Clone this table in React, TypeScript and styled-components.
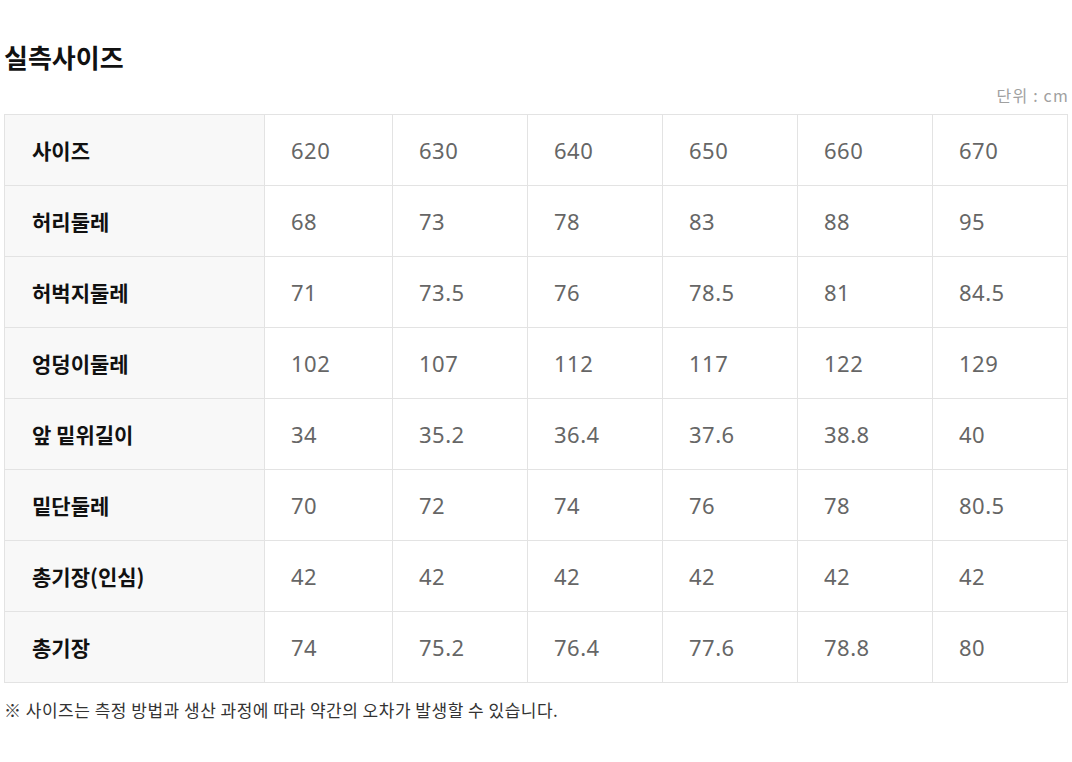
import React from "react";
import styled, { createGlobalStyle } from "styled-components";

const sizes = ["620", "630", "640", "650", "660", "670"];

const rows: { label: string; values: string[] }[] = [
  { label: "허리둘레", values: ["68", "73", "78", "83", "88", "95"] },
  { label: "허벅지둘레", values: ["71", "73.5", "76", "78.5", "81", "84.5"] },
  { label: "엉덩이둘레", values: ["102", "107", "112", "117", "122", "129"] },
  { label: "앞 밑위길이", values: ["34", "35.2", "36.4", "37.6", "38.8", "40"] },
  { label: "밑단둘레", values: ["70", "72", "74", "76", "78", "80.5"] },
  { label: "총기장(인심)", values: ["42", "42", "42", "42", "42", "42"] },
  { label: "총기장", values: ["74", "75.2", "76.4", "77.6", "78.8", "80"] },
];

// widths of the value columns; the last one takes what is left
const colWidths = [128, 135, 135, 135, 135];

const App: React.FC = () => {
  return (
    <>
      <GlobalStyle />
      <Wrapper>
        <Title>실측사이즈</Title>
        <Unit>단위 : cm</Unit>
        <SizeTable>
          <colgroup>
            <Col $width={260} />
            {colWidths.map((w, i) => (
              <Col key={i} $width={w} />
            ))}
            <Col />
          </colgroup>
          <tbody>
            <tr>
              <HeadCell>사이즈</HeadCell>
              {sizes.map((s) => (
                <ValueCell key={s}>{s}</ValueCell>
              ))}
            </tr>
            {rows.map((row) => (
              <tr key={row.label}>
                <HeadCell>{row.label}</HeadCell>
                {row.values.map((v, i) => (
                  <ValueCell key={i}>{v}</ValueCell>
                ))}
              </tr>
            ))}
          </tbody>
        </SizeTable>
        <Note>※ 사이즈는 측정 방법과 생산 과정에 따라 약간의 오차가 발생할 수 있습니다.</Note>
      </Wrapper>
    </>
  );
};

const GlobalStyle = createGlobalStyle`
  body {
    margin: 0;
    background: #fff;
    font-family: "Noto Sans CJK KR", "Noto Sans", sans-serif;
  }
`;

const Wrapper = styled.div`
  padding: 40px 4px 0 4px;
  width: 1064px;
`;

const Title = styled.h2`
  margin: 0;
  font-size: 26px;
  font-weight: 700;
  line-height: 34px;
  color: #111;
`;

const Unit = styled.div`
  margin-top: 11px;
  text-align: right;
  font-size: 16px;
  line-height: 20px;
  color: #a0a0a0;
  letter-spacing: 1.2px;
  margin-right: -1px;
`;

const SizeTable = styled.table`
  margin-top: 9px;
  width: 100%;
  border-collapse: collapse;
  table-layout: fixed;
  border: 1px solid #e3e3e3;
`;

const Col = styled.col<{ $width?: number }>`
  width: ${({ $width }) => ($width ? `${$width}px` : "auto")};
`;

const HeadCell = styled.th`
  height: 70px;
  padding: 0 0 0 27px;
  text-align: left;
  background: #f8f8f8;
  border: 1px solid #e3e3e3;
  font-size: 21px;
  font-weight: 700;
  color: #111;
`;

const ValueCell = styled.td`
  height: 70px;
  padding: 0 0 0 26px;
  border: 1px solid #e3e3e3;
  font-family: "Noto Sans", "Noto Sans CJK KR", sans-serif;
  font-size: 22px;
  letter-spacing: 0.5px;
  color: #666;
`;

const Note = styled.p`
  margin: 16px 0 0 0;
  font-size: 17px;
  line-height: 22px;
  color: #333;
  letter-spacing: 0.5px;
`;

export default App;
